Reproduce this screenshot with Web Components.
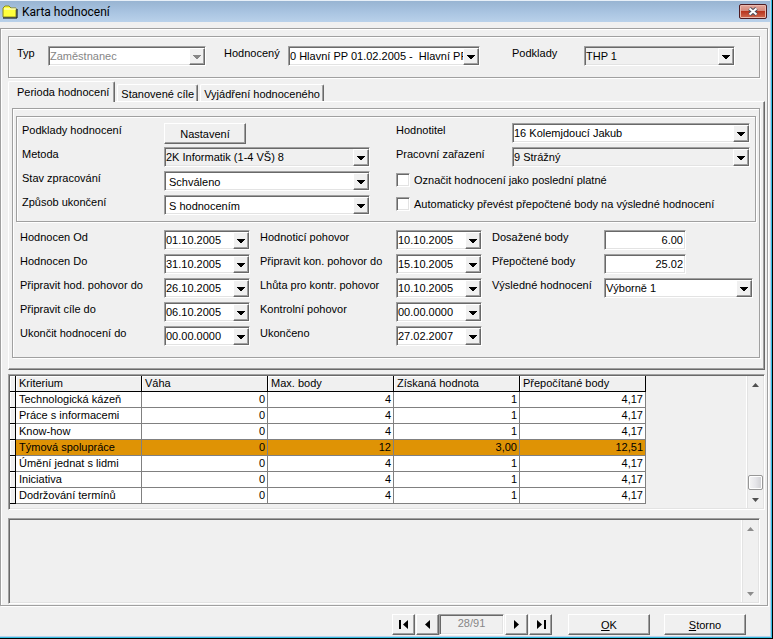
<!DOCTYPE html>
<html lang="cs">
<head>
<meta charset="utf-8">
<title>Karta hodnocení</title>
<style>
  html, body { margin: 0; height: 100%; }
  body { font: 11px/14px "Liberation Sans", Arial, sans-serif; color: #000; background: #f0f0f0; }
  .top { --pad: 9px 24px 11px 8px; margin-right: 5px; }
  .page { --pad: 7px 3px 11px 3px; }
  .sub { --pad: 6px 5px 6px 5px; }
  .grid { display: grid; row-gap: 4px; }
  .g-top { grid-template-columns: 189fr 256fr 237fr; column-gap: 18px; }
  .g-sub { grid-template-columns: 348fr 354fr; column-gap: 26px; }
  .g-low { grid-template-columns: 230fr 222fr 261fr; column-gap: 10px; margin-top: 8px; padding: 0 3px 0 4px; }
  .last { padding-left: 14px; }
  .a { --lw: 142px; } .b { --lw: 116px; }
  .c { --lw: 144px; } .d { --lw: 136px; } .e { --lw: 112px; }
  .num { --cw: 82px; }
  data-grid { margin-top: 4px; }
  note-box { margin: 8px 5px 0 0; flex: 1; }
</style>
</head>
<body>
<app-window caption="Karta hodnocení">
  <etched-panel class="top">
    <div class="grid g-top">
      <form-field kind="select" label="Typ" value="Zaměstnanec" disabled style="--lw:31px"></form-field>
      <form-field kind="combo" label="Hodnocený" value="0 Hlavní PP 01.02.2005 -  Hlavní PP" style="--lw:64px"></form-field>
      <form-field class="last" kind="select" label="Podklady" value="THP 1" gray style="--lw:72px"></form-field>
    </div>
  </etched-panel>

  <tab-sheet tabs="Perioda hodnocení|Stanovené cíle|Vyjádření hodnoceného">
    <etched-panel class="page">
      <etched-panel class="sub">
        <div class="grid g-sub">
          <form-field class="a" kind="button" label="Podklady hodnocení" value="Nastavení" style="--cw:82px"></form-field>
          <form-field class="b" kind="combo" label="Hodnotitel" value="16 Kolemjdoucí Jakub"></form-field>
          <form-field class="a" kind="select" label="Metoda" value="2K Informatik (1-4 VŠ) 8" gray></form-field>
          <form-field class="b" kind="select" label="Pracovní zařazení" value="9 Strážný" gray></form-field>
          <form-field class="a" kind="select" label="Stav zpracování" value="Schváleno" indent></form-field>
          <check-field>Označit hodnocení jako poslední platné</check-field>
          <form-field class="a" kind="select" label="Způsob ukončení" value="S hodnocením" indent></form-field>
          <check-field>Automaticky převést přepočtené body na výsledné hodnocení</check-field>
        </div>
      </etched-panel>
      <div class="grid g-low">
        <form-field class="c" kind="combo" label="Hodnocen Od" value="01.10.2005"></form-field>
        <form-field class="d" kind="combo" label="Hodnoticí pohovor" value="10.10.2005"></form-field>
        <form-field class="e num" kind="number" label="Dosažené body" value="6.00"></form-field>
        <form-field class="c" kind="combo" label="Hodnocen Do" value="31.10.2005"></form-field>
        <form-field class="d" kind="combo" label="Připravit kon. pohovor do" value="15.10.2005"></form-field>
        <form-field class="e num" kind="number" label="Přepočtené body" value="25.02"></form-field>
        <form-field class="c" kind="combo" label="Připravit hod. pohovor do" value="26.10.2005"></form-field>
        <form-field class="d" kind="combo" label="Lhůta pro kontr. pohovor" value="10.10.2005"></form-field>
        <form-field class="e" kind="select" label="Výsledné hodnocení" value="Výborně 1"></form-field>
        <form-field class="c" kind="combo" label="Připravit cíle do" value="06.10.2005"></form-field>
        <form-field class="d" kind="combo" label="Kontrolní pohovor" value="00.00.0000"></form-field>
        <span></span>
        <form-field class="c" kind="combo" label="Ukončit hodnocení do" value="00.00.0000"></form-field>
        <form-field class="d" kind="combo" label="Ukončeno" value="27.02.2007"></form-field>
      </div>
    </etched-panel>
  </tab-sheet>

  <data-grid></data-grid>
  <note-box></note-box>

  <record-nav slot="footer" value="28/91"></record-nav>
  <push-button slot="footer"><u>O</u>K</push-button>
  <push-button slot="footer"><u>S</u>torno</push-button>
</app-window>

<script>
const BASE = `
  *, *::before, *::after { box-sizing: border-box; }
  button, input, select, textarea { font: inherit; color: inherit; margin: 0; padding: 0; border-radius: 0; outline: 0; }
  .sunken { border: 1px solid; border-color: #a0a0a0 #fff #fff #a0a0a0;
    box-shadow: inset 1px 1px #696969, inset -1px -1px #e3e3e3; }
  .raised { background: #f0f0f0; border: 1px solid; border-color: #fff #696969 #696969 #fff;
    box-shadow: inset -1px -1px #a0a0a0; }
`;
const define = (name, html) => customElements.define(name, class extends HTMLElement {
  connectedCallback() {
    if (this.shadowRoot) return;
    this.attachShadow({ mode: 'open' }).innerHTML = typeof html === 'function' ? html(this) : html;
  }
});
const esc = s => (s || '').replace(/&/g, '&amp;').replace(/"/g, '&quot;').replace(/</g, '&lt;');

define('app-window', el => `<style>${BASE}
  :host { box-sizing: border-box; display: flex; flex-direction: column; min-height: 100vh; background: #f0f0f0;
    border-right: 1px solid #000; border-bottom: 1px solid #000;
    box-shadow: inset -1px -1px #35bfe3, inset -2px -2px #b9d1ea; padding: 0 4px 0 0; }
  header { display: flex; align-items: center; height: 22px; padding: 1px 3px 0 2px; margin-right: -2px; gap: 4px;
    background: linear-gradient(#e8f0f8 0 1px, #98b4d2 1px, #a9c4e1 12px, #b9d1ea); }
  h1 { font: 12px/18px Roboto, "Open Sans", sans-serif; margin: 0; flex: 1; }
  .close { width: 28px; height: 15px; border: 1px solid #4f1c22; border-radius: 2px; display: grid; place-items: center;
    background: linear-gradient(#e3a79b, #d58a7c 45%, #b9351f 50%, #d06a50); box-shadow: inset 0 0 0 1px #e9b9ae; }
  svg { display: block; }
  main { display: flex; flex-direction: column; flex: 1; margin-top: 6px; padding: 7px 2px 1px 7px;
    border: 1px solid #a0a0a0; box-shadow: inset 1px 1px #fff, 1px 1px #fff; }
  footer { display: flex; justify-content: flex-end; gap: 14px; padding: 8px 22px 3px 0; }
  </style>
  <header>
    <svg width="16" height="14" viewBox="0 0 16 14"><path d="M1 12V3l2-2h4l2 2h5v9z" fill="#ffff3c" stroke="#8a8a20"/><path d="M2 4h12" stroke="#fffff0"/><path d="M1 13h14V4" fill="none" stroke="#000"/></svg>
    <h1>${esc(el.getAttribute('caption'))}</h1>
    <button class="close" aria-label="Zavřít"><svg width="12" height="9" viewBox="0 0 12 9"><path d="M2.5 1.5l7 6M9.500 1.500l-7 6" stroke="#4b4f5c" stroke-width="4"/><path d="M2.500 1.500l7 6M9.500 1.500l-7 6" stroke="#fff" stroke-width="2"/></svg></button>
  </header>
  <main><slot></slot></main>
  <footer><slot name="footer"></slot></footer>`);

define('etched-panel', `<style>
  :host { display: block; box-sizing: border-box; padding: var(--pad); border: 1px solid #a0a0a0;
    box-shadow: inset 1px 1px #fff, 1px 1px #fff; }
  </style><slot></slot>`);

define('tab-sheet', el => `<style>${BASE}
  :host { display: block; margin-top: 3px; }
  nav { display: flex; align-items: flex-end; gap: 2px; height: 20px; }
  button { height: 17px; padding: 2px 3px 0 3px; background: #f0f0f0; border: 0; border-top: 1px solid #fff; border-left: 1px solid #fff;
    border-right: 1px solid #696969; border-radius: 2px 2px 0 0; box-shadow: inset -1px 0 #a0a0a0; line-height: 14px; white-space: nowrap; }
  button[aria-selected=true] { height: 21px; margin-bottom: -1px; padding: 0 5px 0 8px; position: relative; }
  section { padding: 6px 4px 11px 3px; border: 1px solid; border-color: #fff #696969 #696969 #fff;
    box-shadow: inset -1px -1px #a0a0a0; }
  </style>
  <nav role="tablist">${el.getAttribute('tabs').split('|').map((t, i) =>
    `<button role="tab" aria-selected="${i === 0}">${esc(t)}</button>`).join('')}</nav>
  <section role="tabpanel"><slot></slot></section>`);

const ARROW = `<svg width="8" height="4" viewBox="0 0 8 4" shape-rendering="crispEdges"><path d="M0 0h8v1H7v1H6v1H5v1H3V3H2V2H1V1H0z" fill="currentColor"/></svg>`;

define('form-field', el => {
  const kind = el.getAttribute('kind'), v = esc(el.getAttribute('value')), dis = el.hasAttribute('disabled') ? 'disabled' : '';
  const control = {
    select: `<span class="box sunken"><select id="c" ${dis}><option>${v}</option></select><span class="drop raised">${ARROW}</span></span>`,
    combo: `<span class="box sunken"><input id="c" type="text" value="${v}"><button class="drop raised" aria-label="Rozbalit" tabindex="-1">${ARROW}</button></span>`,
    number: `<span class="box sunken"><input id="c" class="n" type="text" inputmode="decimal" value="${v}"></span>`,
    button: `<button id="c" class="push raised">${v}</button>`
  }[kind];
  return `<style>${BASE}
  :host { display: grid; grid-template-columns: var(--lw) minmax(0, 1fr); height: 20px; }
  label { white-space: nowrap; }
  .box { display: grid; grid-template-columns: minmax(0, 1fr) auto; width: 100%; max-width: var(--cw, none); height: 20px; background: #fff; padding: 1px 0 0 1px; }
  :host([gray]) .box { background: #f0f0f0; }
  :host([disabled]) .box { color: #868686; }
  input, select { width: 100%; height: 16px; border: 0; background: transparent; appearance: none; line-height: 16px; opacity: 1; white-space: pre; }
  select { grid-area: 1 / 1 / 2 / 3; padding-right: 17px; }
  :host([indent]) select { padding: 0 17px 0 3px; height: 17px; }
  .n { grid-column: 1 / 3; text-align: right; padding-right: 2px; height: 16px; }
  .drop { grid-area: 1 / 2; width: 16px; height: 17px; display: grid; place-items: center; pointer-events: none; }
  .push { width: 100%; max-width: var(--cw); height: 21px; }
  svg { display: block; }
  </style><label for="c">${esc(el.getAttribute('label'))}</label>${control}`;
});

define('check-field', `<style>${BASE}
  :host { display: block; box-sizing: border-box; height: 20px; padding-top: 2px; }
  label { display: flex; gap: 4px; line-height: 14px; white-space: nowrap; }
  input { appearance: none; width: 14px; height: 14px; background: #fff; }
  </style><label><input type="checkbox" class="sunken"><span><slot></slot></span></label>`);

const BAR = `
  .bar { display: flex; flex-direction: column; justify-content: space-between; width: 17px; background: #f0f0f0; border-left: 1px solid #fff;
    box-shadow: inset 1px 0 #e3e3e3; }
  .bar button { display: grid; place-items: center; height: 17px; width: 100%; border: 0; background: none; }
  .bar svg { display: block; }`;
const tri = (d, c) => `<svg width="7" height="4" viewBox="0 0 7 4"><path d="${d}" fill="${c}"/></svg>`;
const bar = (c, thumb) => `<div class="bar"><button aria-label="Nahoru">${tri('M0 4L3.500 0 7 4z', c)}</button>${thumb}<button aria-label="Dolů">${tri('M0 0h7L3.500 4z', c)}</button></div>`;

const ROWS = [
  ['Technologická kázeň', '0', '4', '1', '4,17'], ['Práce s informacemi', '0', '4', '1', '4,17'],
  ['Know-how', '0', '4', '1', '4,17'], ['Týmová spolupráce', '0', '12', '3,00', '12,51'],
  ['Úmění jednat s lidmi', '0', '4', '1', '4,17'], ['Iniciativa', '0', '4', '1', '4,17'],
  ['Dodržování termínů', '0', '4', '1', '4,17']];
define('data-grid', `<style>${BASE}${BAR}
  :host { display: block; }
  .wrap { display: flex; justify-content: space-between; height: 136px; padding: 1px; background: #f0f0f0; }
  table { border-spacing: 0; table-layout: fixed; width: 636px; height: min-content; }
  td, th { height: 16px; padding: 0 2px 0 3px; font-weight: normal; text-align: right; line-height: 15px; overflow: hidden; white-space: nowrap;
    border-right: 1px solid #808080; border-bottom: 1px solid #808080; background: #fff; }
  th, td:nth-child(2) { text-align: left; }
  thead th, td:first-child { background: #f0f0f0; border-color: #000; box-shadow: inset 1px 1px #fff; }
  .sel td:not(:first-child) { background: #df9305; }
  .thumb { width: 15px; height: 15px; margin: auto 0 1px 1px; border: 1px solid #979797; border-radius: 2px;
    background: linear-gradient(90deg, #f5f5f5, #e6e6ea 50%, #cfcfd2); box-shadow: inset 0 0 0 1px #fff; }
  </style><div class="wrap sunken"><table>
  <colgroup><col style="width:6px"><col span="5"></colgroup>
  <thead><tr><th></th><th>Kriterium</th><th>Váha</th><th>Max. body</th><th>Získaná hodnota</th><th>Přepočítané body</th></tr></thead>
  <tbody>${ROWS.map((r, i) => `<tr${i === 3 ? ' class="sel"' : ''}><td></td>${r.map(c => `<td>${c}</td>`).join('')}</tr>`).join('')}</tbody>
  </table>${bar('#505050', '<div class="thumb"></div>')}</div>`);

define('note-box', `<style>${BASE}${BAR}
  :host { display: flex; min-height: 60px; }
  .wrap { display: flex; flex: 1; padding: 1px; }
  textarea { flex: 1; border: 0; resize: none; background: transparent; }
  </style><div class="wrap sunken"><textarea aria-label="Poznámka"></textarea>${bar('#8c8c8c', '')}</div>`);

const left = 'M6 0v9L1 4.500z', right = 'M1 0v9l5-4.500z';
const nav = (label, body, w = 7) => `<button class="raised" aria-label="${label}"><svg width="${w}" height="10" viewBox="0 0 ${w} 10">${body}</svg></button>`;
define('record-nav', el => `<style>${BASE}
  :host { display: flex; gap: 1px; margin-right: 2px; }
  button { width: 23px; height: 21px; display: grid; place-items: center; }
  svg { display: block; }
  input { width: 65px; height: 21px; text-align: center; color: #868686; background: #f0f0f0; margin: 0 0 0 -1px; padding: 0 0 3px; }
  </style>
  ${nav('První', '<path d="M0 0h2v9H0zM9 0v9L4 4.500z"/>', 10)}${nav('Předchozí', `<path d="${left}"/>`)}
  <input class="sunken" aria-label="Záznam" disabled value="${esc(el.getAttribute('value'))}">
  ${nav('Další', `<path d="${right}"/>`)}${nav('Poslední', '<path d="M8 0h2v9H8zM1 0v9l5-4.500z"/>', 10)}`);

define('push-button', `<style>${BASE}
  :host { display: block; }
  button { width: 82px; height: 21px; }
  </style><button class="raised"><slot></slot></button>`);
</script>
</body>
</html>
